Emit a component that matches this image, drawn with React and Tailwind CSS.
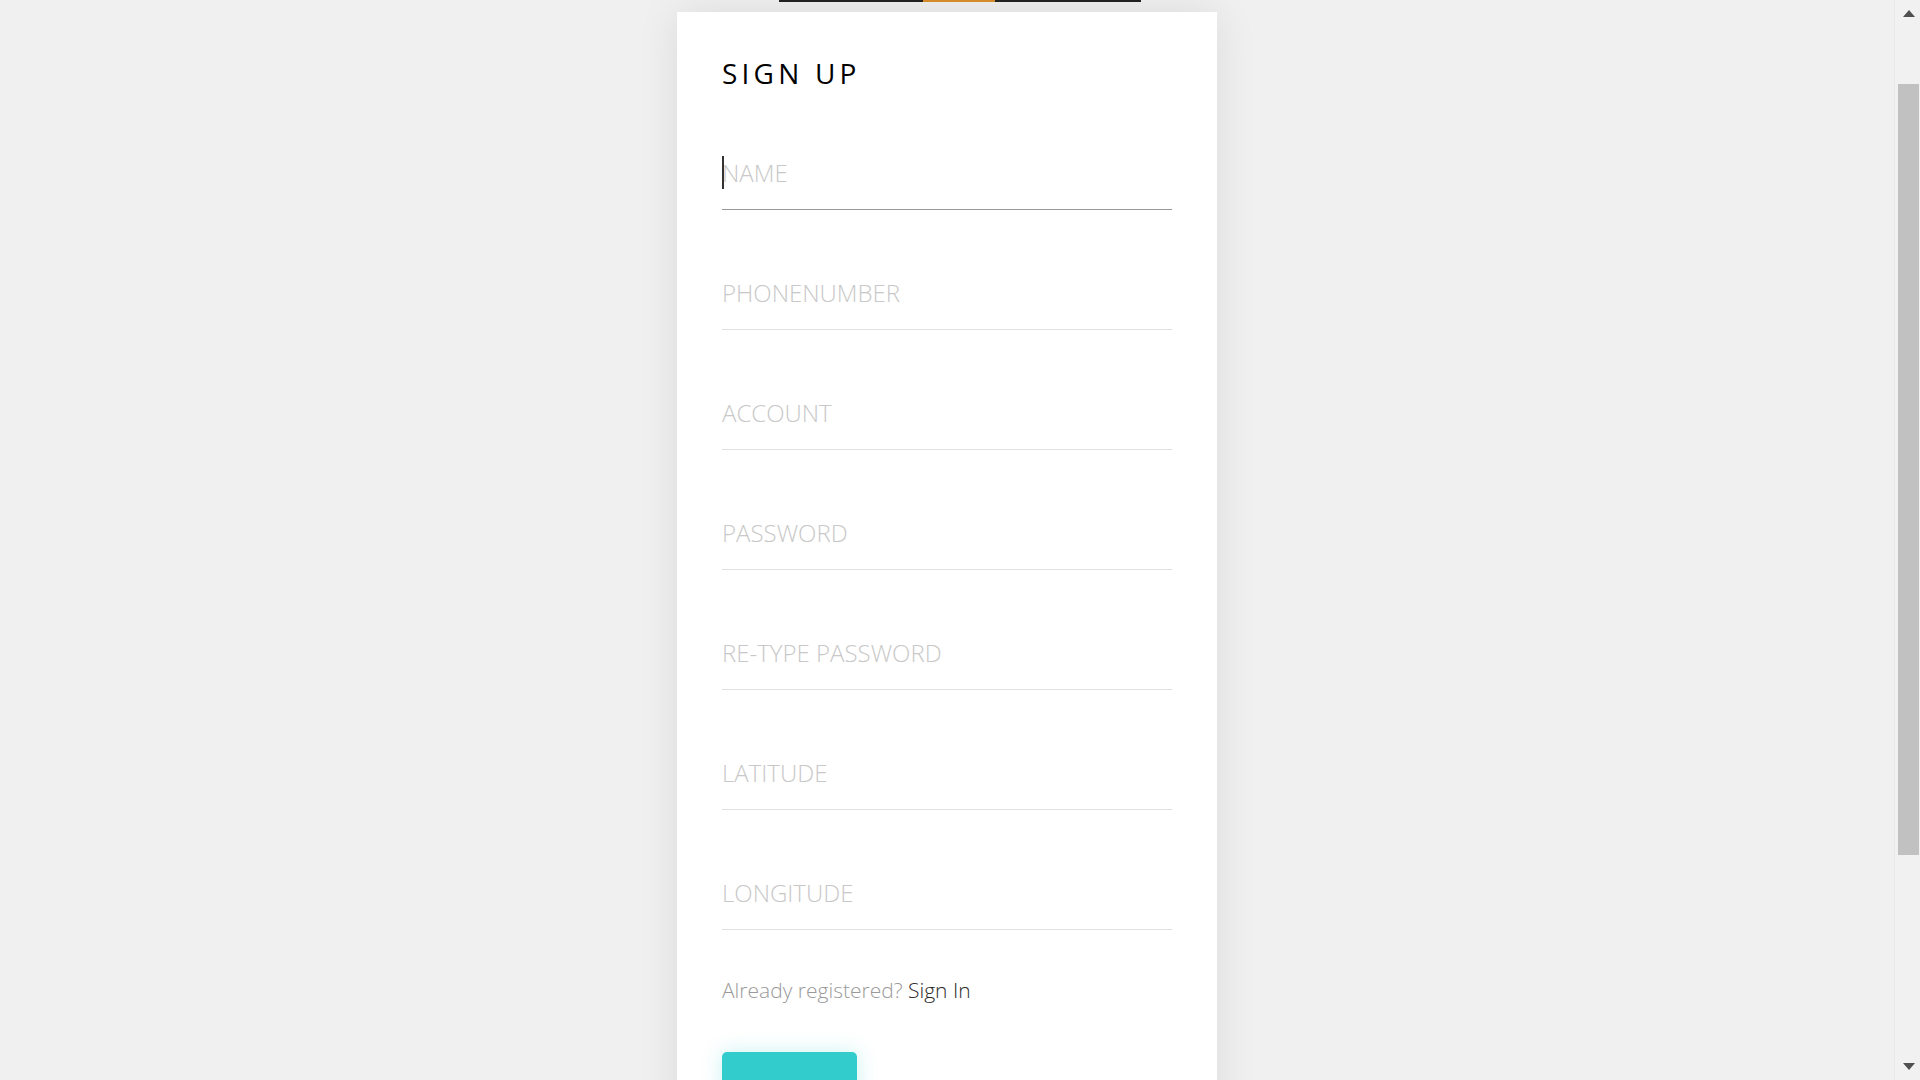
const fields = [
  "NAME",
  "PHONENUMBER",
  "ACCOUNT",
  "PASSWORD",
  "RE-TYPE PASSWORD",
  "LATITUDE",
  "LONGITUDE",
];

function App() {
  return (
    <div className="min-h-screen bg-[#f0f0f0] font-['Open_Sans',sans-serif]">
      {/* bottom edge of the nav strip above */}
      <div className="ml-[779px] flex h-[2px] w-[362px]">
        <div className="w-[144px] bg-[#222222]" />
        <div className="w-[72px] bg-[#d4892b]" />
        <div className="flex-1 bg-[#222222]" />
      </div>

      <div className="ml-[677px] mt-[10px] w-[540px] bg-white px-[45px] pt-[42px] pb-[45px] shadow-[0_0_40px_rgba(0,0,0,0.09)]">
        <h1 className="text-[28px] leading-[38px] font-normal tracking-[0.15em] text-black">
          SIGN UP
        </h1>

        <form className="mt-[54px] flex flex-col gap-[56px]">
          {fields.map((f, i) => (
            <div key={f} className="relative">
              <input
                type={f.includes("PASSWORD") ? "password" : "text"}
                placeholder={f}
                className={
                  "block w-full border-b bg-transparent pt-[10px] pb-[20px] text-[24px] leading-[33px] font-light text-[#333] outline-none placeholder:text-[#c8c8c8] " +
                  (i === 0 ? "border-[#999999]" : "border-[#e0e0e0]")
                }
              />
              {i === 0 && (
                <span className="pointer-events-none absolute left-0 top-[10px] h-[33px] w-[2px] bg-[#333333]" />
              )}
            </div>
          ))}
        </form>

        <p className="mt-[45px] text-[21px] leading-[30px] font-light text-[#9a9a9a]">
          Already registered? <a href="#" className="text-[#2b2b2b]">Sign In</a>
        </p>

        <button
          type="button"
          aria-label="Sign up"
          className="mt-[47px] h-[50px] w-[135px] rounded-[5px] bg-[#33cccc] shadow-[0_0_20px_rgba(51,204,204,0.25)]"
        />
      </div>

      {/* window scrollbar */}
      <div className="fixed right-0 top-0 flex h-screen w-[26px] flex-col items-center border-l border-[#e8e8e8] bg-[#f1f1f1]">
        <svg width="12" height="7" viewBox="0 0 12 7" className="mt-[10px] ml-[2px]">
          <path d="M6 0 L12 7 L0 7 Z" fill="#505050" />
        </svg>
        <div className="mt-[67px] h-[771px] w-[21px] ml-[2px] bg-[#c1c1c1]" />
        <div className="flex-1" />
        <svg width="12" height="7" viewBox="0 0 12 7" className="mb-[10px] ml-[2px]">
          <path d="M0 0 L12 0 L6 7 Z" fill="#505050" />
        </svg>
      </div>
    </div>
  );
}

export default App;
